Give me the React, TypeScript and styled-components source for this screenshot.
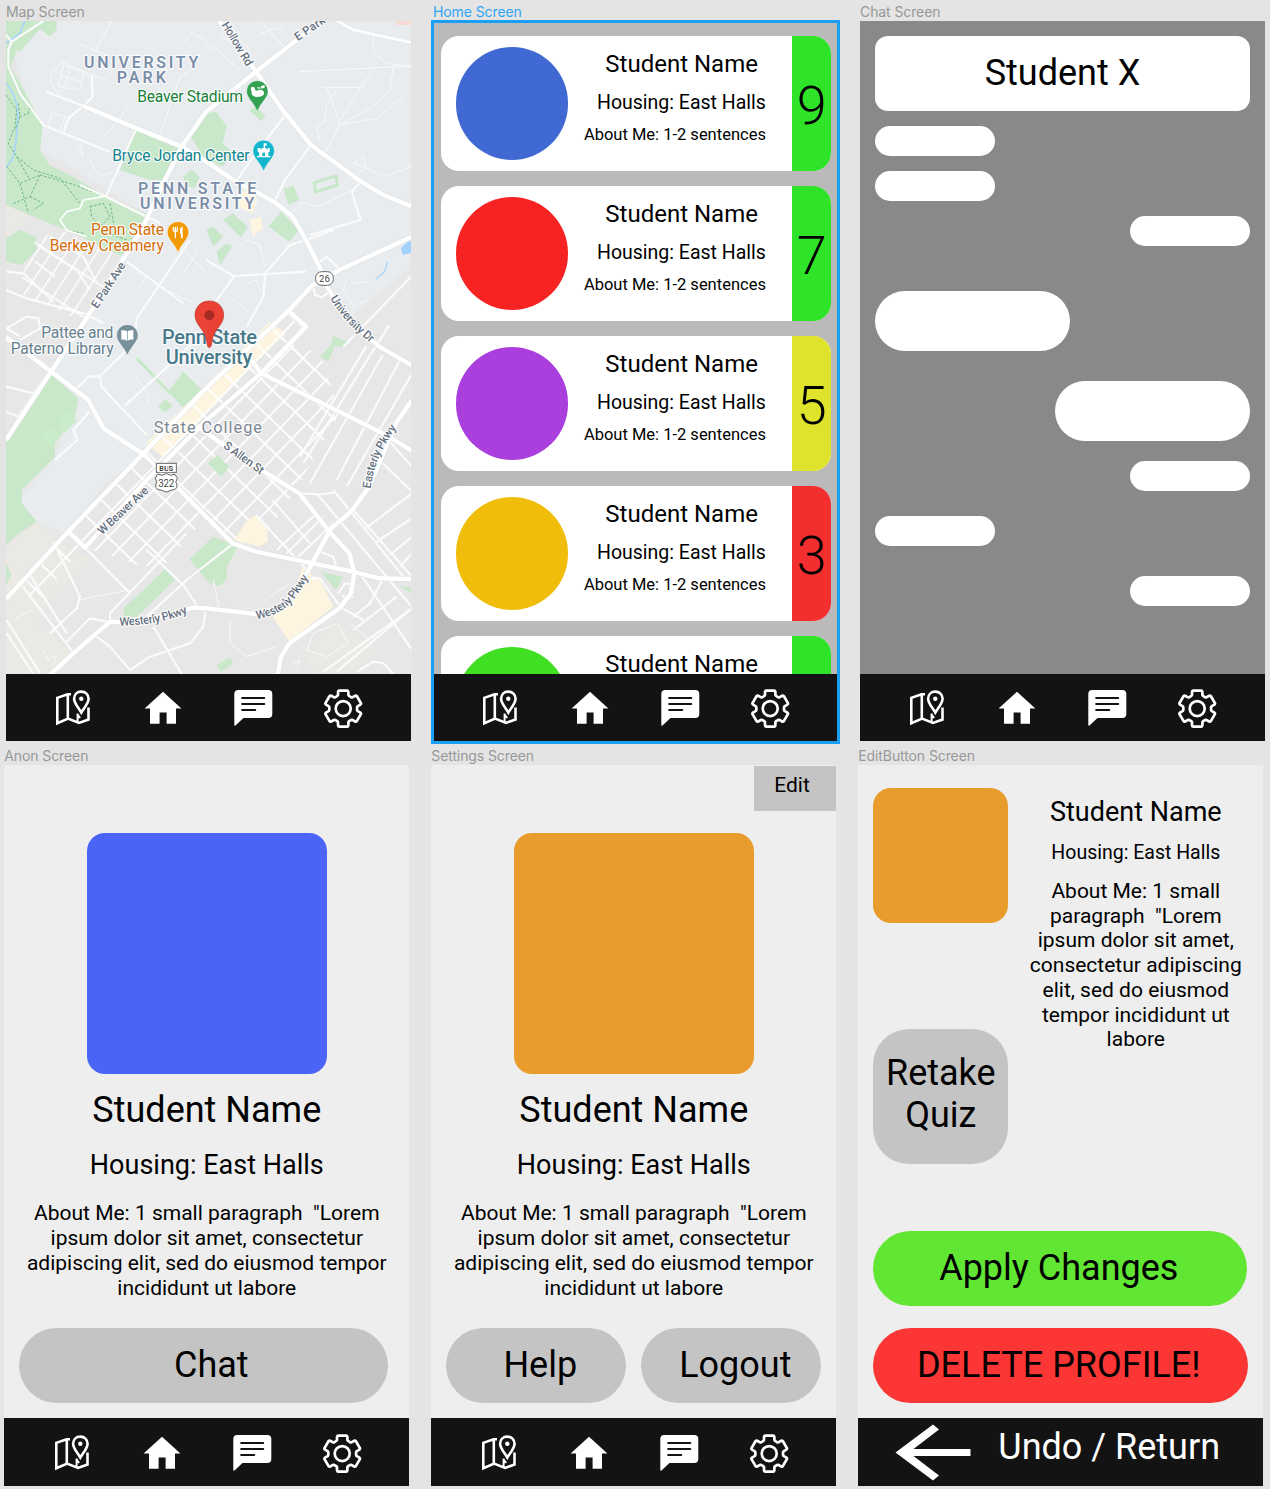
import React from 'react';
import styled, { createGlobalStyle } from 'styled-components';

const Global = createGlobalStyle`
  * { box-sizing: border-box; }
  body { margin: 0; background: #e4e4e4; font-family: Roboto, sans-serif; color: #000; }
`;

const Board = styled.main`
  width: 1270px;
  height: 1489px;
  overflow: hidden;
  background: #e4e4e4;
`;
const Row = styled.div<{ $inset: number }>`
  display: flex;
  gap: 22px;
  padding-left: ${p => p.$inset}px;
`;
const Artboard = styled.section`
  width: 405px;
  flex: none;
`;
const Caption = styled.div<{ $height: number; $active?: boolean }>`
  height: ${p => p.$height}px;
  display: flex;
  align-items: flex-end;
  padding-bottom: 1px;
  font: 400 14px/17px Inter, sans-serif;
  letter-spacing: -0.1px;
  color: ${p => (p.$active ? '#2fa4f5' : '#989898')};
`;
const Frame = styled.div<{ $selected?: boolean }>`
  position: relative;
  width: 405px;
  ${p => p.$selected && `&::after {
    content: ''; position: absolute; inset: -1px -2px -3px -2px;
    border: 3px solid #1b9ff5; pointer-events: none;
  }`}
`;
const Body = styled.div<{ $bg: string }>`
  height: 653px;
  overflow: hidden;
  background: ${p => p.$bg};
`;

/* ---------- bottom navigation ---------- */
const Nav = styled.nav<{ $height: number }>`
  height: ${p => p.$height}px;
  background: #131313;
  display: flex;
  align-items: center;
  padding: 1px 0 0 45.400px;
  gap: 46px;
  svg { width: 44px; height: 44px; flex: none; display: block; }
`;

const MapIcon = () => (
  <svg viewBox="0 0 44 44" fill="none" stroke="#fff" strokeWidth="2.600">
    <path d="M20 8.200 16.600 8.200 6.300 11.800v25.400l10.800-4.600 10.900 4.300L37.500 33.500V21.500M16.800 8.200v24.500" />
    <path d="M30.300 5.600c-4.200 0-7.200 3-7.200 7.200 0 4.600 4.200 8.600 7.200 13.800 3-5.200 7.300-9.200 7.300-13.800 0-4.200-3.100-7.200-7.300-7.200Z" />
    <path strokeWidth="2" d="M26.600 27.500v8.500M26.600 28.500l2.500 3.500" />
    <circle cx="30.300" cy="12.700" r="2.200" fill="#fff" stroke="none" />
  </svg>
);
const HomeIcon = () => (
  <svg viewBox="0 0 44 44" fill="#fff">
    <path d="M22 5.800 3.600 22.400H9v15.300h9.600V26.500h7v11.200H35V22.400h5.400Z" />
  </svg>
);
const ChatIcon = () => (
  <svg viewBox="0 0 44 44">
    <path fill="#fff" d="M7.300 4h30a4 4 0 0 1 4 4v20a4 4 0 0 1-4 4H12.500L5.500 38.600Q3.300 41 3.300 38.500V8a4 4 0 0 1 4-4Z" />
    <path stroke="#131313" strokeWidth="2.100" strokeLinecap="round" d="M11.200 12h22M11.200 18h22M11.200 24h13" />
  </svg>
);

const polar = (radius: number, degrees: number) => {
  const a = (degrees * Math.PI) / 180;
  return `${(22.2 + radius * Math.sin(a)).toFixed(2)} ${(22.6 - radius * Math.cos(a)).toFixed(2)}`;
};
const gearOutline = 'M' + [0, 60, 120, 180, 240, 300]
  .map(t => `${polar(14.5, t - 21)}L${polar(17.6, t - 17)}Q${polar(18.9, t - 15)} ${polar(18.4, t - 11)}L${polar(18.4, t + 11)}Q${polar(18.9, t + 15)} ${polar(17.6, t + 17)}L${polar(14.5, t + 21)}Q${polar(13.6, t + 25)} ${polar(13.9, t + 30)}Q${polar(13.6, t + 35)} ${polar(14.5, t + 39)}`)
  .join('L') + 'Z';
const GearIcon = () => (
  <svg viewBox="0 0 44 44" fill="none" stroke="#fff" strokeWidth="2.700" strokeLinejoin="round">
    <path d={gearOutline} />
    <circle cx="22.200" cy="22.600" r="7.500" />
  </svg>
);
const TabBar = ({ height = 67 }: { height?: number }) => (
  <Nav $height={height}><MapIcon /><HomeIcon /><ChatIcon /><GearIcon /></Nav>
);

/* ---------- map ---------- */
const MapSvg = styled.svg`
  display: block;
  width: 405px;
  height: 653px;
  background: #e7e7e7;
  font-family: Roboto, sans-serif;
  text { paint-order: stroke; stroke: #fff; stroke-width: 7px; stroke-opacity: .85; stroke-linejoin: round; }
`;

type LabelProps = { x: number; y: number; w: number; size?: number; color: string; weight?: number; rotate?: number; children: string };
const Label = ({ x, y, w, size = 47, color, weight = 400, rotate = 0, children }: LabelProps) => (
  <text x={x} y={y} textLength={w} fontSize={size} fontWeight={weight} fill={color} transform={`rotate(${rotate} ${x} ${y})`}>{children}</text>
);
const Pin = ({ x, y, color, children }: { x: number; y: number; color: string; children: React.ReactNode }) => (
  <g transform={`translate(${x} ${y})`}>
    <path d="M0-33C-19-33-32-18-32-1-32 19-13 29 0 59 13 29 32 19 32-1 32-18 19-33 0-33Z" fill={color} stroke="#fff" strokeOpacity=".6" strokeWidth="2" />
    {children}
  </g>
);

const majorRoads = [
  'M963 63 768 215 618 335 545 440 480 570 430 680 380 760 250 970 150 1120 18 1320',
  'M658 63 768 215 848 330 933 435 1083 545 1150 585 1236 620',
  'M250 318 410 385 545 440 618 485 708 545 823 605 878 650 918 720 963 810 968 835 993 880 1058 970 1138 1040 1236 1097',
  'M1236 710 1018 810 938 855 868 930 618 1165 430 1360 205 1595 18 1797',
  'M868 935 918 980 783 1120 618 1262 440 1440 255 1643 205 1595',
  'M18 1012 150 1112 265 1200 310 1285 430 1362 530 1460 636 1568 698 1630 768 1655 1058 1715 1138 1735 1236 1737',
  'M748 1070 783 1120 958 1205 1148 1300 1236 1352',
  'M590 1278 678 1340 718 1365 808 1425 898 1480 988 1595 1048 1660 1063 1720 1053 1780 1018 1825 868 1930 843 1970 833 2025',
  'M1236 1200 1188 1270 1148 1365 1108 1460 1053 1535 993 1585 928 1705 890 1770 838 1822 768 1842 618 1825 580 1823 480 1850 380 1867 330 1865 220 1960 150 2025',
];
const mediumRoads = [
  'M35 125 25 150 25 200 60 280 130 375 190 400 330 455', 'M250 318 205 355 190 400', 'M408 388 318 590',
  'M130 63 35 125 18 105', 'M480 670 318 590 240 555', 'M250 318 140 275', 'M275 225 278 290 250 318',
  'M708 545 760 470 856 345', 'M933 435 855 540 823 605', 'M1083 545 1055 575 1082 660 930 705',
  'M380 785 550 910', 'M570 720 410 955 405 1000', 'M618 780 700 828 918 815', 'M795 820 790 890 740 980',
  'M795 820 870 735 918 720 1000 690', 'M705 825 600 970', 'M230 1165 265 1130 300 1128 305 1160 440 1305',
  'M300 1128 375 1055', 'M375 1217 600 1010', 'M268 1235 220 1290 232 1320 165 1380',
  'M938 855 945 885 965 892 990 875', 'M960 785 980 770 1020 808',
  'M18 870 80 895 250 940 310 970', 'M20 815 70 820 160 905', 'M18 1160 100 1180 145 1120', 'M18 1235 55 1250 140 1125',
  'M60 1010 20 985 80 950 115 955 120 985 60 1020', 'M105 785 165 830', 'M150 710 250 770 290 850', 'M120 740 230 810 270 870',
];
const townRoads = [
  'M1233 830 1030 1040', 'M1168 975 1095 1090 910 1390', 'M1098 1040 900 1370', 'M1148 1065 930 1450', 'M1200 1080 1010 1440', 'M1236 1120 1040 1460',
  'M1148 1300 1236 1400', 'M1148 1390 1236 1475', 'M1060 1530 1236 1730', 'M1000 1470 1210 1730', 'M950 1480 1260 1850', 'M1080 1720 1236 1950',
  'M1236 1480 1090 1590', 'M1236 1555 1130 1625', 'M1236 1610 1170 1665', 'M1236 1660 1200 1700', 'M1236 1825 1010 2015', 'M1190 1790 1060 1890', 'M1150 1735 1110 1810 1060 1850',
  'M890 1480 960 1483 1008 1477', 'M768 1545 930 1720', 'M818 1500 930 1630', 'M860 1660 970 1550', 'M830 1650 950 1540', 'M895 1670 1000 1570',
  'M960 1655 1000 1670 1010 1705', 'M930 1735 960 1735 1020 1820', 'M1018 1820 1090 1860', 'M20 1860 120 2020', 'M20 1900 100 2022', 'M65 1755 225 1965', 'M90 1725 200 1900',
  'M290 1910 330 1940 390 2010 450 1970 510 1950 570 1930 610 1880 616 1835', 'M460 1880 545 2022', 'M200 1925 270 1855 320 1865', 'M330 1860 330 1840 440 1725 560 1600',
  'M255 1643 390 1780', 'M160 1625 240 1790 230 1825 150 1900', 'M440 1650 550 1755 590 1815', 'M700 1630 560 1740 440 1850', 'M1070 2015 1120 1985 1150 1990 1180 2022',
  'M970 2015 1236 1825', 'M1015 1780 1035 1750 1060 1755', 'M1025 1785 1040 1795 1060 1790',
];
const trails = 'M18 285 50 330 45 380 25 430 50 470 100 510 180 535 240 610M55 310 60 350 85 340 90 320M60 350 45 390M20 500 60 550 120 525 90 590 40 610M60 550 85 640M90 590 130 610 100 630M120 525 210 550 318 590M50 470 90 540M270 620 310 610 330 650 300 680 275 650ZM330 610 345 690M300 690 380 720M250 700 200 690';
const paths = 'M155 220 185 185 275 225 320 240M155 220 150 250 200 310M175 260 190 195 250 215 240 270ZM210 205 195 260M180 225 240 245M145 380 155 340 195 350 180 390M335 63 285 155M235 130 320 165M480 405 540 230 590 200M550 130 575 100 610 115 640 150M230 440 250 470 240 430M265 475 300 530 335 515M315 410 365 345 385 320M1010 375 1070 280 1120 210M980 262 1020 372M965 262 1090 262M900 215 1233 198M1120 110 1120 155 1160 190 1236 200M1180 200 1170 270 1118 320 1020 375 1130 355 1210 290M1020 375 973 460M960 420 950 380 975 365 980 310 1010 270M780 63 850 140M780 100 850 80M640 140 720 210M660 110 700 130 735 190M690 80 750 150M875 640 910 605 950 620 1050 575M1060 490 1110 510 1150 530 1236 500M1060 490 1090 470 1100 500 1070 525M1040 840 1030 870 1060 920 1100 900M1050 850 1105 845M700 760 740 720 780 735 795 800M740 850 770 840 780 870M750 940 690 890M440 830 410 870M480 860 580 910M520 720 620 820M590 760 550 820M400 1120 450 1190 440 1210M240 1800 280 1790 390 1770M40 1860 95 1830M130 1950 145 1980 170 1965 160 1995M940 1900 1010 1870 1045 1930 980 1970 920 1950ZM690 1860 690 1930 740 1970 830 1940M810 1790 870 1750M880 1990 900 1980 890 2010M640 1740 657 1820M1050 1870 1110 1920';

const CampusMap = () => (
  <MapSvg viewBox="18 63 1215 1959" preserveAspectRatio="none">
    <defs>
      <pattern id="blocks" width="66" height="48" patternUnits="userSpaceOnUse" patternTransform="translate(618 1165) rotate(-46)">
        <path d="M0 0H66M0 0V48" stroke="#fff" strokeWidth="11" />
      </pattern>
      <pattern id="lots" width="108" height="38" patternUnits="userSpaceOnUse" patternTransform="translate(150 760) rotate(-57)">
        <path d="M0 0H108M0 0V38" stroke="#fff" strokeWidth="9" />
      </pattern>
      <path id="westerlyA" d="M358 1877Q490 1875 572 1834" />
      <path id="westerlyB" d="M770 1857Q850 1845 888 1790L938 1715" />
      <path id="easterly" d="M1112 1466Q1122 1370 1194 1278" />
      <path id="universityDr" d="M990 895Q1030 965 1118 1034" />
      <clipPath id="view"><rect x="18" y="63" width="1215" height="1959" /></clipPath>
    </defs>
    <g clipPath="url(#view)">
      <path fill="#e8ecef" d="M18 63H1236V795L1035 965 968 865 938 855 868 930 618 1160 430 1365 315 1450 200 1600 110 1565 60 1500 165 1370 230 1190 150 1120 440 640 125 450Z" />
      <path fill="#ebe9e4" d="M18 1650Q50 1600 110 1570L190 1635 270 1680 150 1790 110 1870 230 1970 150 2025H18ZM18 615 90 650 18 710ZM903 1950 1018 1865 1068 1910 1138 1950 1038 2025H948Z" />
      <path fill="#fad9d4" d="M1188 63H1236V75H1188Z" />
      <g fill="#c8e8c9">
        <path d="M18 63H170V88L150 110 120 87 60 155 50 150 32 200 60 250 128 375 120 450 148 495 210 525 318 590 440 642 368 770 210 695 18 615Z" />
        <path d="M18 715 60 690 108 710 110 750 65 795 18 785Z" />
        <path d="M408 388 535 440 505 540 450 540 360 510ZM565 400 600 365 618 340 648 335 680 378 668 430 700 460 668 500 610 470ZM748 330 768 318 796 348 783 363ZM851 568 880 556 898 600 866 615ZM843 635 896 690 868 725 806 680ZM550 530 575 508 598 530 585 565 555 555Z" />
        <path d="M670 660 698 640 743 680 723 712ZM650 755 680 730 696 740 660 795ZM618 690 640 680 670 710 640 740Z" />
        <path d="M18 1320 150 1122 235 1195 225 1250 165 1330 165 1370 65 1470 65 1510 110 1565 50 1605 18 1635Z" />
        <path d="M550 1115 612 1175 555 1230 505 1175ZM475 1220 495 1198 518 1215 495 1238ZM998 1008 1043 1025 1030 1042 1003 1038 986 1085 960 1072 993 1035Z" />
        <path d="M18 1690 35 1725 18 1755ZM963 1717 1030 1730 1008 1770ZM1198 1758 1236 1762V1782ZM650 1995 690 1972 700 1990 663 2015Z" />
      </g>
      <path fill="none" stroke="#c8e8c9" strokeWidth="9" d="M410 1075 510 1180M942 548 1008 528 1012 555 947 576Z" />
      <path fill="#c9edca" d="M120 1310 150 1282 185 1308 155 1335ZM172 1268 205 1230 230 1262 195 1298Z" />
      <g fill="#fdf5df">
        <path d="M808 965 858 1000 690 1160 568 1290 488 1370 438 1330 618 1155Z" />
        <path d="M718 580 745 568 773 600 758 640 713 620ZM748 660 783 650 788 685 758 710ZM908 1700 963 1745 1000 1820 868 1925 818 1850 878 1790Z" />
      </g>
      <path fill="url(#blocks)" d="M868 940 915 980 870 1030 960 1060 1000 1180 1020 1240 880 1480 800 1600 740 1640 615 1555 500 1690 430 1700 250 1640 110 1810 65 1755 205 1595 430 1362 618 1165Z" />
      <path fill="url(#lots)" d="M110 710 200 695 368 770 250 965 60 880 70 820Z" />
      <g fill="#c8e8c9"><path d="M372 1825 495 1708 525 1740 410 1850H370ZM568 1678 640 1610 713 1640 683 1695 678 1740 658 1758 628 1750ZM623 1390 653 1365 688 1400 663 1430Z" /></g>
      <path fill="#fdf5df" d="M768 1545 803 1590V1625L778 1640 703 1620 738 1565Z" />
      <g fill="none" stroke="#a9d5fb"><path strokeWidth="5" d="M75 63 60 100 18 130M18 250C70 310 50 380 48 420Q45 475 20 500" /><path strokeWidth="4" d="M1163 785 1153 815 1128 838" /></g>
      <path fill="#a2d2fb" d="M1203 745 1223 725 1236 722V758L1208 765Z" />
      <path fill="none" stroke="#5cab77" strokeWidth="2.500" strokeDasharray="8 5" d={trails} />
      <path fill="none" stroke="#f9f9f9" strokeWidth="3" strokeLinejoin="round" d={paths} />
      <path fill="none" stroke="#fff" strokeWidth="5" d="M200 635 180 660 200 690 260 710M200 635 240 625 250 600 310 590" />
      <path fill="none" stroke="#fff" strokeWidth="7" strokeLinejoin="round" d="M1000 55 1060 90 1120 103 1236 128" />
      <g fill="none" stroke="#fbfbfb" strokeWidth="6.500" strokeLinejoin="round">
        {mediumRoads.map(d => <path key={d} d={d} />)}
        {townRoads.map(d => <path key={d} d={d} />)}
      </g>
      <g fill="none" stroke="#d9dde0" strokeWidth="16" strokeLinejoin="round">{majorRoads.map(d => <path key={d} d={d} />)}</g>
      <g fill="none" stroke="#fff" strokeWidth="13.500" strokeLinejoin="round">{majorRoads.map(d => <path key={d} d={d} />)}</g>

      <Label x={252} y={204} w={343} size={48} weight={600} color="#7b8ea8">UNIVERSITY</Label>
      <Label x={350} y={249} w={148} size={48} weight={600} color="#7b8ea8">PARK</Label>
      <Label x={412} y={305} w={317} color="#188038">Beaver Stadium</Label>
      <Label x={337} y={484} w={412} color="#12858d">Bryce Jordan Center</Label>
      <Label x={414} y={582} w={355} size={48} weight={600} color="#7b8ea8">PENN STATE</Label>
      <Label x={420} y={628} w={343} size={48} weight={600} color="#7b8ea8">UNIVERSITY</Label>
      <Label x={273} y={706} w={219} color="#d56e0c">Penn State</Label>
      <Label x={149} y={752} w={343} color="#d56e0c">Berkey Creamery</Label>
      <Label x={124} y={1014} w={216} color="#67808f">Pattee and</Label>
      <Label x={32} y={1061} w={309} color="#67808f">Paterno Library</Label>
      <Label x={486} y={1032} w={285} size={60} weight={500} color="#48798b">Penn State</Label>
      <Label x={497} y={1093} w={260} size={60} weight={500} color="#48798b">University</Label>
      <Label x={461} y={1300} w={325} size={49} color="#7d8794">State College</Label>
      <Label x={292} y={928} w={158} size={35} weight={500} color="#65717f" rotate={-57}>E Park Ave</Label>
      <Label x={306} y={1606} w={193} size={35} weight={500} color="#65717f" rotate={-43}>W Beaver Ave</Label>
      <Label x={668} y={1342} w={140} size={35} weight={500} color="#65717f" rotate={36}>S Allen St</Label>
      <Label x={664} y={74} w={148} size={35} weight={500} color="#65717f" rotate={59}>Hollow Rd</Label>
      <Label x={893} y={124} w={103} size={35} weight={500} color="#65717f" rotate={-34}>E Park</Label>
      <g fontSize="35" fontWeight="500" fill="#65717f">
        <text><textPath href="#westerlyA" textLength="210">Westerly Pkwy</textPath></text>
        <text><textPath href="#westerlyB" textLength="208">Westerly Pkwy</textPath></text>
        <text><textPath href="#easterly" textLength="201">Easterly Pkwy</textPath></text>
        <text><textPath href="#universityDr" textLength="182">University Dr</textPath></text>
      </g>

      <rect x="947" y="815" width="53" height="41" rx="18" fill="#fff" stroke="#666" strokeWidth="3" />
      <Label x={957} y={846} w={33} size={29} color="#444">26</Label>
      <rect x="469" y="1390" width="60" height="27" fill="#fff" stroke="#666" strokeWidth="3" />
      <Label x={478} y={1412} w={42} size={23} weight={700} color="#444">BUS</Label>
      <path d="M473 1423Q486 1429 499 1421 512 1429 525 1423L532 1435Q523 1447 531 1455 532 1470 515 1470L499 1476 483 1470Q466 1470 467 1455 475 1447 466 1435Z" fill="#fff" stroke="#666" strokeWidth="3" />
      <Label x={475} y={1461} w={48} size={30} color="#444">322</Label>

      <Pin x={772} y={275} color="#34a253">
        <path fill="#fff" d="M-20-10Q-17-17-9-13L-5-3 12-6Q22-3 20 7 16 16-3 16-18 14-17 3ZM-2-12 8-7 9-14ZM11-17 22-20V-12L12-9Z" />
      </Pin>
      <Pin x={791} y={454} color="#12b5cb">
        <path fill="#fff" d="M-18-10H-10V-6H-6V-10H0V-24H9V-17H4V-10H8V-6H12V-10H18V2H14V14H20V18H-20V14H-14V2H-18Z" /><path fill="#12b5cb" d="M-4 4H4V14H-4Z" />
      </Pin>
      <Pin x={534} y={698} color="#f29900">
        <path fill="none" stroke="#fff" strokeWidth="4" d="M-14-17V-6Q-8 1-2-6V-17M-8-17V17" /><path fill="#fff" d="M6-12Q8-17 14-18V17H9V3H6Z" />
      </Pin>
      <Pin x={382} y={1007} color="#78909c">
        <path fill="#fff" d="M-18-16Q-8-18-1-13V15Q-9 10-18 12ZM18-16Q8-18 1-13V15Q9 10 18 12Z" />
      </Pin>
      <path fill="#ea4335" stroke="#b93227" strokeWidth="2" d="M628 903C603 903 585 921 585 946 585 970 607 985 617 1010L623 1039Q628 1047 633 1039L639 1010C649 985 671 970 671 946 671 921 653 903 628 903Z" />
      <circle cx="628" cy="946" r="15" fill="#a52a21" />
    </g>
  </MapSvg>
);

/* ---------- home ---------- */
const Feed = styled.div`
  display: flex;
  flex-direction: column;
  gap: 15px;
  padding: 15.400px 0 0 7.500px;
`;
const StudentCard = styled.article`
  display: flex;
  flex: none;
  width: 390px;
  height: 135px;
  overflow: hidden;
  border-radius: 18px;
  background: #fff;
`;
const Avatar = styled.div<{ $color: string }>`
  width: 112.500px;
  height: 112.500px;
  margin: 11px 0 0 15px;
  border-radius: 50%;
  background: ${p => p.$color};
`;
const CardText = styled.div`
  flex: 1;
  display: flex;
  flex-direction: column;
  align-items: flex-end;
  padding: 13.600px 26px 0 0;
  white-space: nowrap;
`;
const CardName = styled.div`
  margin-right: 8px;
  font-size: 24px;
  line-height: 28px;
`;
const CardHousing = styled.div`
  margin-top: 14px;
  font-size: 19.500px;
  line-height: 22px;
`;
const CardAbout = styled.div`
  margin-top: 11px;
  font-size: 16.500px;
  line-height: 20px;
`;
const Score = styled.div<{ $color: string }>`
  width: 38.600px;
  display: flex;
  align-items: center;
  justify-content: center;
  padding: 3px 0 0 1px;
  background: ${p => p.$color};
  font-size: 54px;
  font-weight: 350;
`;
const students = [
  { avatar: '#4169d3', score: 9, tone: '#2fe328' },
  { avatar: '#f72323', score: 7, tone: '#2fe328' },
  { avatar: '#ab3fdd', score: 5, tone: '#dfe32b' },
  { avatar: '#f1bd0b', score: 3, tone: '#f22e2e' },
  { avatar: '#41df24', score: null, tone: '#2fe328' },
];

/* ---------- chat ---------- */
const Thread = styled.div`
  display: flex;
  flex-direction: column;
  padding: 15.400px 15px 0;
`;
const ChatHeader = styled.h2`
  margin: 0;
  height: 75px;
  border-radius: 13px;
  background: #fff;
  display: flex;
  align-items: center;
  justify-content: center;
  padding-bottom: 1px;
  font-size: 36px;
  font-weight: 400;
`;
const Bubble = styled.div<{ $mine?: boolean; $large?: boolean; $gap: number }>`
  align-self: ${p => (p.$mine ? 'flex-end' : 'flex-start')};
  width: ${p => (p.$large ? 195 : 120)}px;
  height: ${p => (p.$large ? 60 : 30)}px;
  margin-top: ${p => p.$gap}px;
  border-radius: 30px;
  background: #fff;
`;

/* ---------- profile ---------- */
const Profile = styled.div`
  position: relative;
  display: flex;
  flex-direction: column;
  align-items: center;
  padding: 68px 15px 0;
`;
const Photo = styled.div<{ $size: number; $color: string }>`
  width: ${p => p.$size}px;
  height: ${p => p.$size}px;
  flex: none;
  border-radius: 18px;
  background: ${p => p.$color};
`;
const Name = styled.h1<{ $size: number; $top: number }>`
  margin: ${p => p.$top}px 0 0;
  font-size: ${p => p.$size}px;
  line-height: ${p => p.$size * 1.17}px;
  font-weight: 400;
  white-space: nowrap;
`;
const Housing = styled.div<{ $size: number; $top: number }>`
  margin-top: ${p => p.$top}px;
  font-size: ${p => p.$size}px;
  line-height: ${p => p.$size * 1.17}px;
  white-space: nowrap;
`;
const About = styled.p<{ $top: number }>`
  margin: ${p => p.$top}px 0 0;
  font-size: 21px;
  line-height: 24.750px;
  text-align: center;
  white-space: pre;
`;
const Actions = styled.div`
  display: flex;
  gap: 15px;
  align-self: stretch;
  margin-top: 27.400px;
`;
const Pill = styled.button<{ $width: number; $color?: string; $shift?: number }>`
  width: ${p => p.$width}px;
  height: 75px;
  flex: none;
  border: 0;
  border-radius: 38px;
  padding: 0 ${p => Math.max(0, -(p.$shift ?? 0))}px 1px ${p => Math.max(0, p.$shift ?? 0)}px;
  background: ${p => p.$color ?? '#c4c4c4'};
  color: #000;
  font: 400 36px/42px Roboto, sans-serif;
  white-space: nowrap;
`;
const EditTab = styled.button`
  position: absolute;
  top: 0.500px;
  right: 0;
  width: 82.500px;
  height: 45px;
  border: 0;
  padding: 0 6px 5px 0;
  background: #c4c4c4;
  color: #000;
  font: 400 21px/25px Roboto, sans-serif;
`;

/* ---------- edit ---------- */
const EditLayout = styled.div`
  display: grid;
  grid-template-columns: 135px 240px;
  grid-template-rows: 443px auto;
  padding: 22.500px 15px 0;
`;
const EditSide = styled.div`
  display: flex;
  flex-direction: column;
  justify-content: space-between;
  height: 376px;
`;
const Retake = styled.button`
  width: 135px;
  height: 135px;
  border: 0;
  border-radius: 36px;
  padding: 0 0 4px;
  background: #c4c4c4;
  color: #000;
  font: 400 36px/42px Roboto, sans-serif;
`;
const EditInfo = styled.div`
  display: flex;
  flex-direction: column;
  align-items: center;
  padding-left: 15px;
`;
const EditActions = styled.div`
  grid-column: 1 / -1;
  display: flex;
  flex-direction: column;
  gap: 22.500px;
`;
const ReturnBar = styled.div`
  height: 68px;
  background: #131313;
  color: #fff;
  display: flex;
  align-items: flex-start;
  gap: 27px;
  padding: 6px 0 0 37px;
  font-size: 36px;
  line-height: 47px;
  svg { width: 76px; height: 57px; flex: none; }
`;

const longAbout = 'About Me: 1 small paragraph  "Lorem\nipsum dolor sit amet, consectetur\nadipiscing elit, sed do eiusmod tempor\nincididunt ut labore';
const narrowAbout = 'About Me: 1 small\nparagraph  "Lorem\nipsum dolor sit amet,\nconsectetur adipiscing\nelit, sed do eiusmod\ntempor incididunt ut\nlabore';

const ProfileDetails = ({ color }: { color: string }) => (
  <>
    <Photo $size={240.5} $color={color} />
    <Name $size={36} $top={15}>Student Name</Name>
    <Housing $size={27} $top={19}>Housing: East Halls</Housing>
    <About $top={20.1}>{longAbout}</About>
  </>
);

export default function App() {
  return (
    <Board>
      <Global />
      <Row $inset={6}>
        <Artboard>
          <Caption $height={21}>Map Screen</Caption>
          <Frame><Body $bg="#e7e7e7"><CampusMap /></Body><TabBar /></Frame>
        </Artboard>
        <Artboard>
          <Caption $height={21} $active>Home Screen</Caption>
          <Frame $selected>
            <Body $bg="#bababa">
              <Feed>
                {students.map(s => (
                  <StudentCard key={s.avatar}>
                    <Avatar $color={s.avatar} />
                    <CardText>
                      <CardName>Student Name</CardName>
                      <CardHousing>Housing: East Halls</CardHousing>
                      <CardAbout>About Me: 1-2 sentences</CardAbout>
                    </CardText>
                    <Score $color={s.tone}>{s.score}</Score>
                  </StudentCard>
                ))}
              </Feed>
            </Body>
            <TabBar />
          </Frame>
        </Artboard>
        <Artboard>
          <Caption $height={21}>Chat Screen</Caption>
          <Frame>
            <Body $bg="#898989">
              <Thread>
                <ChatHeader>Student X</ChatHeader>
                <Bubble $gap={15} />
                <Bubble $gap={15} />
                <Bubble $gap={15} $mine />
                <Bubble $gap={45} $large />
                <Bubble $gap={30} $large $mine />
                <Bubble $gap={19.5} $mine />
                <Bubble $gap={25.5} />
                <Bubble $gap={30} $mine />
              </Thread>
            </Body>
            <TabBar />
          </Frame>
        </Artboard>
      </Row>
      <Row $inset={4.3}>
        <Artboard>
          <Caption $height={24}>Anon Screen</Caption>
          <Frame>
            <Body $bg="#eeeeee">
              <Profile>
                <ProfileDetails color="#4a64f6" />
                <Actions><Pill $width={369} $shift={15}>Chat</Pill></Actions>
              </Profile>
            </Body>
            <TabBar height={68} />
          </Frame>
        </Artboard>
        <Artboard>
          <Caption $height={24}>Settings Screen</Caption>
          <Frame>
            <Body $bg="#eeeeee">
              <Profile>
                <EditTab>Edit</EditTab>
                <ProfileDetails color="#e89c2b" />
                <Actions>
                  <Pill $width={180} $shift={8}>Help</Pill>
                  <Pill $width={180} $shift={8}>Logout</Pill>
                </Actions>
              </Profile>
            </Body>
            <TabBar height={68} />
          </Frame>
        </Artboard>
        <Artboard>
          <Caption $height={24}>EditButton Screen</Caption>
          <Frame>
            <Body $bg="#eeeeee">
              <EditLayout>
                <EditSide>
                  <Photo $size={135} $color="#e89c2b" />
                  <Retake>Retake<br />Quiz</Retake>
                </EditSide>
                <EditInfo>
                  <Name $size={27} $top={9}>Student Name</Name>
                  <Housing $size={19.5} $top={13.5}>Housing: East Halls</Housing>
                  <About $top={14.5}>{narrowAbout}</About>
                </EditInfo>
                <EditActions>
                  <Pill $width={374} $color="#61e634" $shift={-3}>Apply Changes</Pill>
                  <Pill $width={375} $color="#fb3635" $shift={-4}>DELETE PROFILE!</Pill>
                </EditActions>
              </EditLayout>
            </Body>
            <ReturnBar>
              <svg viewBox="0 0 76 57" fill="#fff">
                <path d="M38 .5 44 5.500 18.500 25H75.500V32H18.500L44 51.500 38 56.500 .5 28.500Z" />
              </svg>
              Undo / Return
            </ReturnBar>
          </Frame>
        </Artboard>
      </Row>
    </Board>
  );
}
